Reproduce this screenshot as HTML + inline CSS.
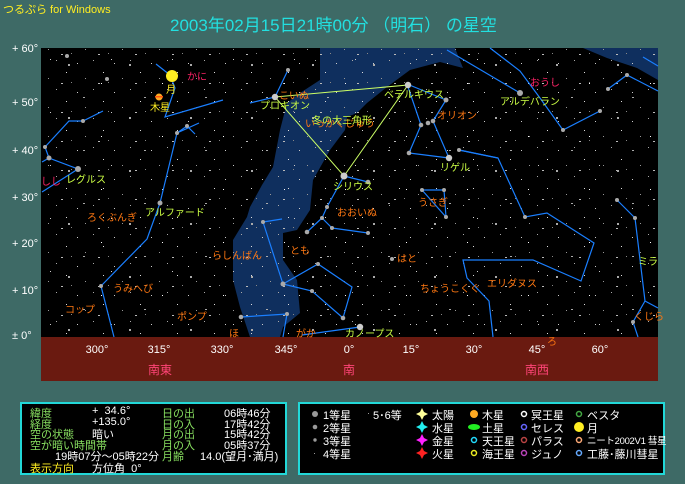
<!DOCTYPE html>
<html><head><meta charset="utf-8"><style>
*{margin:0;padding:0}
body{width:685px;height:484px;overflow:hidden;background:#3e6a66;font-family:"Liberation Sans","Noto Sans CJK JP",sans-serif;position:relative}
.t{position:absolute;white-space:nowrap}
.panel{position:absolute;background:#000;border:2px solid #22d8d8;box-sizing:border-box}
.g{color:#88e060;font-size:11px}
.w{color:#fff;font-size:11px}
</style></head><body>
<div class="t" style="left:3px;top:1px;color:#ffee22;font-size:11px">つるぷら for Windows</div>
<div class="t" style="left:170px;top:11px;color:#22e0e0;font-size:17px;letter-spacing:0px">2003年02月15日21時00分 （明石） の星空</div>

<div class="t w" style="left:12px;top:43px">+ 60°</div>
<div class="t w" style="left:12px;top:97px">+ 50°</div>
<div class="t w" style="left:12px;top:145px">+ 40°</div>
<div class="t w" style="left:12px;top:192px">+ 30°</div>
<div class="t w" style="left:12px;top:238px">+ 20°</div>
<div class="t w" style="left:12px;top:285px">+ 10°</div>
<div class="t w" style="left:12px;top:330px">± 0°</div>

<svg style="position:absolute;left:0;top:0" width="685" height="484" font-family="Liberation Sans, Noto Sans CJK JP, sans-serif" font-size="10">
<defs>
<pattern id="st" width="37" height="29" patternUnits="userSpaceOnUse">
<rect x="3" y="5" width="1" height="1" fill="#ccc"/><rect x="19" y="2" width="1" height="1" fill="#aaa"/>
<rect x="29" y="14" width="1" height="1" fill="#ddd"/><rect x="11" y="20" width="1" height="1" fill="#999"/>
<rect x="24" y="25" width="2" height="1" fill="#bbb"/><rect x="34" y="24" width="1" height="1" fill="#888"/>
</pattern>
<pattern id="st2" width="61" height="53" patternUnits="userSpaceOnUse">
<rect x="7" y="11" width="2" height="2" fill="#aaa"/><rect x="40" y="30" width="1" height="1" fill="#fff"/>
<rect x="50" y="6" width="1" height="1" fill="#ccc"/><rect x="22" y="44" width="2" height="1" fill="#aaa"/>
</pattern>
</defs>
<rect x="41" y="48" width="617" height="289" fill="#000"/>
<path d="M320,48 L455,48 L463,68 L440,62 L410,70 L387,87 L367,103 L357,113 L347,117 L345,130 L330,150 L313,180 L310,210 L297,230 L283,233 L283,260 L297,280 L300,313 L283,327 L280,337 L250,337 L240,307 L233,280 L233,240 L247,217 L250,207 L262,185 L273,167 L280,130 L287,103 L300,93 L320,80 Z" fill="#0f2f5e"/>
<path d="M583,48 L658,48 L658,80 L637,68 L607,58 Z" fill="#0f2f5e"/>
<rect x="41" y="48" width="617" height="289" fill="url(#st)"/>
<rect x="41" y="48" width="617" height="289" fill="url(#st2)"/>
<rect x="41" y="337" width="617" height="44" fill="#6a1a10"/>
<g stroke="#1a7fff" stroke-width="1.2" fill="none">
<polyline points="156,64 170,75 175,88 165,117 223,100"/>
<polyline points="103,111 83,121 69,121 45,147 49,158 78,169 42,192"/>
<polyline points="49,158 42,162"/>
<polyline points="195,134 187,126 177,133 199,123"/>
<polyline points="177,133 160,203 147,239 101,286 114,337"/>
<polyline points="263,222 282,219"/>
<polyline points="263,222 283,284 318,264 352,287 343,318 312,291 283,284"/>
<polyline points="241,317 287,314 283,337"/>
<polyline points="302,335 360,327"/>
<polyline points="368,182 344,176 327,207 322,218 307,232"/>
<polyline points="322,218 332,228 368,233"/>
<polyline points="407,84 446,100 433,121"/>
<polyline points="407,84 421,125 409,153 449,158 433,121"/>
<polyline points="459,150 498,158"/>
<polyline points="422,190 444,190 446,217 422,190"/>
<polyline points="447,50 520,93"/>
<polyline points="490,48 520,71 540,98 563,130 600,111"/>
<polyline points="608,89 627,75 658,91"/>
<polyline points="643,57 658,66"/>
<polyline points="459,150 498,158 525,217 547,213 594,243 581,281 533,260 463,260 467,278 489,301 493,337"/>
<polyline points="617,200 635,218 645,301 658,308"/>
<polyline points="645,301 633,322 638,337"/>
<polyline points="288,70 275,97 250,103"/>
</g>
<polygon points="275,97 408,85 344,176" fill="none" stroke="#ccff66" stroke-width="1"/>
<g fill="#aaa">
<circle cx="344" cy="176" r="3.5" fill="#ccc"/><circle cx="275" cy="97" r="3.2" fill="#ccc"/><circle cx="408" cy="85" r="3.2" fill="#ccc"/>
<circle cx="449" cy="158" r="3.2" fill="#ccc"/><circle cx="360" cy="327" r="3.2" fill="#ccc"/><circle cx="78" cy="169" r="3"/>
<circle cx="520" cy="93" r="3"/><circle cx="160" cy="203" r="2.5"/><circle cx="49" cy="158" r="2.5"/>
<circle cx="446" cy="100" r="2.5"/><circle cx="421" cy="125" r="2.3"/><circle cx="428" cy="123" r="2.3"/><circle cx="433" cy="121" r="2.3"/><circle cx="409" cy="153" r="2.3"/>
<circle cx="368" cy="182" r="2.3"/><circle cx="307" cy="232" r="2.3"/><circle cx="332" cy="228" r="2"/><circle cx="368" cy="233" r="2"/><circle cx="322" cy="218" r="2"/><circle cx="327" cy="207" r="2"/>
<circle cx="263" cy="222" r="2"/><circle cx="283" cy="284" r="2.5"/><circle cx="318" cy="264" r="2"/><circle cx="343" cy="318" r="2.3"/><circle cx="312" cy="291" r="2"/><circle cx="241" cy="317" r="2.3"/><circle cx="287" cy="314" r="2"/>
<circle cx="101" cy="286" r="2"/><circle cx="177" cy="133" r="2"/><circle cx="187" cy="126" r="2"/><circle cx="83" cy="121" r="2"/><circle cx="45" cy="147" r="2"/>
<circle cx="563" cy="130" r="2"/><circle cx="600" cy="111" r="2"/><circle cx="627" cy="75" r="2"/><circle cx="608" cy="89" r="2"/><circle cx="459" cy="150" r="2"/>
<circle cx="525" cy="217" r="2"/><circle cx="422" cy="190" r="2"/><circle cx="446" cy="217" r="2"/><circle cx="444" cy="190" r="2"/>
<circle cx="617" cy="200" r="2"/><circle cx="635" cy="218" r="2"/><circle cx="633" cy="322" r="2"/><circle cx="392" cy="259" r="2"/><circle cx="288" cy="70" r="2"/><circle cx="107" cy="79" r="2"/><circle cx="67" cy="56" r="2"/>
</g>
<circle cx="172" cy="76" r="6" fill="#ffee22"/>
<circle cx="159" cy="97" r="3.5" fill="#ffaa22"/><rect x="155" y="96" width="8" height="1.5" fill="#ff5511"/>
<g fill="#ff7711">
<text x="87" y="221">ろくぶんぎ</text><text x="113" y="292">うみへび</text><text x="65" y="313">コップ</text>
<text x="177" y="320">ポンプ</text><text x="212" y="259">らしんばん</text><text x="290" y="254">とも</text>
<text x="337" y="216">おおいぬ</text><text x="418" y="206">うさぎ</text><text x="397" y="262">はと</text>
<text x="420" y="292">ちょうこくぐ</text><text x="487" y="287">エリダヌス</text><text x="437" y="119">オリオン</text>
<text x="279" y="99">こいぬ</text><text x="305" y="127">いっかくじゅう</text><text x="296" y="337">がか</text>
<text x="229" y="337">ほ</text><text x="547" y="345">ろ</text><text x="634" y="320">くじら</text>
</g>
<g fill="#ccff44">
<text x="66" y="183">レグルス</text><text x="145" y="216">アルファード</text><text x="260" y="109">プロキオン</text>
<text x="333" y="190">シリウス</text><text x="384" y="98">ベテルギウス</text><text x="440" y="171">リゲル</text>
<text x="500" y="105">アルデバラン</text><text x="345" y="337">カノープス</text><text x="638" y="265">ミラ</text>
<text x="312" y="124">冬の大三角形</text>
</g>
<g fill="#ff2266"><text x="187" y="80">かに</text><text x="41" y="185">しし</text><text x="530" y="86">おうし</text></g>
<g fill="#ffee22"><text x="166" y="93">月</text><text x="150" y="111">木星</text></g>
<g fill="#fff" font-size="11" text-anchor="middle">
<text x="97" y="353">300°</text><text x="159" y="353">315°</text><text x="222" y="353">330°</text><text x="286" y="353">345°</text>
<text x="349" y="353">0°</text><text x="411" y="353">15°</text><text x="474" y="353">30°</text><text x="537" y="353">45°</text><text x="600" y="353">60°</text>
</g>
<g fill="#ff4477" font-size="12" text-anchor="middle"><text x="160" y="374">南東</text><text x="349" y="374">南</text><text x="537" y="374">南西</text></g>
</svg>

<div class="panel" style="left:20px;top:402px;width:267px;height:73px"></div>
<div class="t g" style="left:30px;top:405px">緯度</div><div class="t w" style="left:92px;top:405px">+ &nbsp;34.6°</div>
<div class="t g" style="left:30px;top:416px">経度</div><div class="t w" style="left:92px;top:416px">+135.0°</div>
<div class="t g" style="left:30px;top:426px">空の状態</div><div class="t w" style="left:92px;top:426px">暗い</div>
<div class="t g" style="left:30px;top:437px">空が暗い時間帯</div>
<div class="t w" style="left:55px;top:448px">19時07分〜05時22分</div>
<div class="t" style="left:30px;top:460px;color:#ffee22;font-size:11px">表示方向</div><div class="t w" style="left:92px;top:460px">方位角 &nbsp;0°</div>
<div class="t g" style="left:162px;top:405px">日の出</div><div class="t w" style="left:224px;top:405px">06時46分</div>
<div class="t g" style="left:162px;top:416px">日の入</div><div class="t w" style="left:224px;top:416px">17時42分</div>
<div class="t g" style="left:162px;top:426px">月の出</div><div class="t w" style="left:224px;top:426px">15時42分</div>
<div class="t g" style="left:162px;top:437px">月の入</div><div class="t w" style="left:224px;top:437px">05時37分</div>
<div class="t g" style="left:162px;top:448px">月齢</div><div class="t w" style="left:200px;top:448px">14.0(望月･満月)</div>

<div class="panel" style="left:298px;top:402px;width:367px;height:73px"></div>
<svg style="position:absolute;left:298px;top:402px" width="367" height="73">
<circle cx="17" cy="12" r="3" fill="#999"/><circle cx="17" cy="25" r="2.3" fill="#999"/><circle cx="17" cy="38" r="1.7" fill="#999"/><rect x="16" y="51" width="1" height="1" fill="#999"/>
<rect x="70" y="11" width="1" height="1" fill="#999"/>
<path d="M124,6 L126,10 L130,12 L126,14 L124,18 L122,14 L118,12 L122,10Z" fill="#ffff99"/>
<path d="M124,19 L126,23 L130,25 L126,27 L124,31 L122,27 L118,25 L122,23Z" fill="#22eeee"/>
<path d="M124,32 L126,36 L130,38 L126,40 L124,44 L122,40 L118,38 L122,36Z" fill="#ff22ff"/>
<path d="M124,45 L126,49 L130,51 L126,53 L124,57 L122,53 L118,51 L122,49Z" fill="#ff2222"/>
<circle cx="176" cy="12" r="4" fill="#ffaa22"/><ellipse cx="176" cy="25" rx="6" ry="3" fill="#22ee22"/>
<circle cx="176" cy="38" r="2.5" fill="none" stroke="#22ddff" stroke-width="1.5"/><circle cx="176" cy="51" r="2.5" fill="none" stroke="#eeee22" stroke-width="1.5"/>
<circle cx="226" cy="12" r="2.5" fill="none" stroke="#fff" stroke-width="1.5"/><circle cx="226" cy="25" r="2.5" fill="none" stroke="#6666ff" stroke-width="1.5"/>
<circle cx="226" cy="38" r="2.5" fill="none" stroke="#bb4444" stroke-width="1.5"/><circle cx="226" cy="51" r="2.5" fill="none" stroke="#bb44bb" stroke-width="1.5"/>
<circle cx="281" cy="12" r="2.5" fill="none" stroke="#44aa44" stroke-width="1.5"/><circle cx="281" cy="25" r="5" fill="#ffee22"/>
<circle cx="281" cy="38" r="2.5" fill="none" stroke="#ffaa77" stroke-width="1.5"/><circle cx="281" cy="51" r="2.5" fill="none" stroke="#66aaff" stroke-width="1.5"/>
</svg>
<div class="t w" style="left:323px;top:407px">1等星</div><div class="t w" style="left:323px;top:420px">2等星</div>
<div class="t w" style="left:323px;top:433px">3等星</div><div class="t w" style="left:323px;top:446px">4等星</div>
<div class="t w" style="left:373px;top:407px">5･6等</div>
<div class="t w" style="left:432px;top:407px">太陽</div><div class="t w" style="left:432px;top:420px">水星</div>
<div class="t w" style="left:432px;top:433px">金星</div><div class="t w" style="left:432px;top:446px">火星</div>
<div class="t w" style="left:482px;top:407px">木星</div><div class="t w" style="left:482px;top:420px">土星</div>
<div class="t w" style="left:482px;top:433px">天王星</div><div class="t w" style="left:482px;top:446px">海王星</div>
<div class="t w" style="left:531px;top:407px">冥王星</div><div class="t w" style="left:531px;top:420px">セレス</div>
<div class="t w" style="left:531px;top:433px">パラス</div><div class="t w" style="left:531px;top:446px">ジュノ</div>
<div class="t w" style="left:587px;top:407px">ベスタ</div><div class="t w" style="left:587px;top:420px">月</div>
<div class="t w" style="left:587px;top:433px;font-size:9.5px;letter-spacing:-0.3px">ニート2002V1 彗星</div><div class="t w" style="left:587px;top:446px">工藤･藤川彗星</div>
</body></html>
